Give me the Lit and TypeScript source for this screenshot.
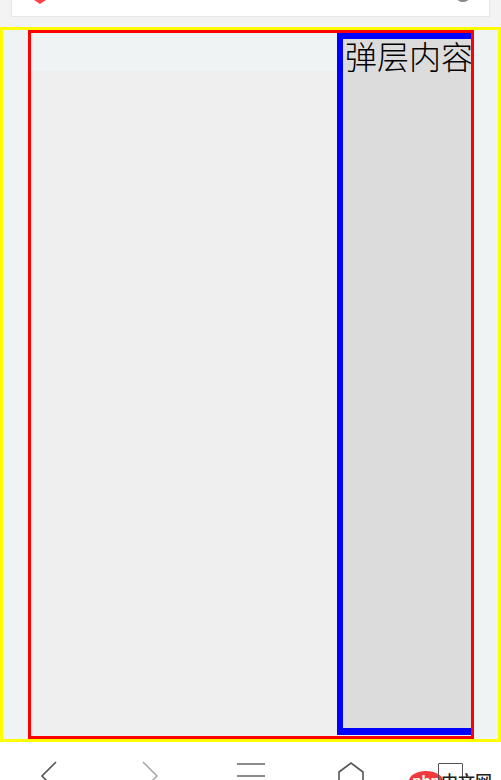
import { LitElement, html, css } from "lit";
import { customElement } from "lit/decorators.js";

@customElement("app-root")
export class AppRoot extends LitElement {
  static styles = css`
    :host { display: block; width: 501px; height: 780px; overflow: hidden; background: #f3f3f3; font-family: "Noto Sans CJK SC", "Liberation Sans", sans-serif; }
    .top { height: 27px; box-sizing: border-box; padding: 0 11px 0 11px; }
    .bar { position: relative; height: 17px; box-sizing: border-box; background: #fff; border: 1px solid #e6e6e6; border-top: 0; overflow: hidden; }
    .pin { position: absolute; left: 22px; top: -3px; width: 12px; height: 7px; }
    .dot { position: absolute; left: 445px; top: -6px; width: 12px; height: 8px; border-radius: 50%; background: #888; }
    .outer { height: 715px; box-sizing: border-box; border: 3px solid #ff0; background: #f0f3f4; padding-left: 25px; }
    .red { height: 100%; box-sizing: border-box; width: 446px; border: 3px solid #f00; background: #efefef; position: relative; display: flex; justify-content: flex-end; align-items: flex-start; }
    .tint { position: absolute; left: 0; top: 0; right: 0; height: 38px; background: #f0f3f4; }
    .panel { position: relative; width: 134px; height: 702px; box-sizing: border-box; border: 6px solid #00f; border-right: 0; border-bottom-width: 7px; background: #dcdcdc; padding-left: 2px; font-size: 32px; font-weight: 300; line-height: 36px; color: #000; white-space: nowrap; overflow: hidden; }
    .panel span { display: block; margin-top: -2px; }
    .nav { height: 38px; background: #fff; display: flex; align-items: flex-start; padding-top: 20px; box-sizing: border-box; overflow: hidden; }
    .nav svg { flex: none; overflow: visible; }
    .back { margin-left: 41px; }
    .forward { margin-left: 85px; }
    .menu { margin-left: 79px; }
    .home { margin-left: 73px; }
    .logo { position: relative; flex: none; width: 84px; height: 18px; margin-left: 45px; }
    .wm { position: absolute; left: 0; top: 9px; width: 34px; height: 20px; border-radius: 50%; background: #f03a3c; color: #fff; font: 700 15px/19px "Liberation Sans", sans-serif; text-align: center; }
    .box { position: absolute; left: 29px; top: 1px; width: 25px; height: 26px; box-sizing: border-box; border: 1.5px solid #555; border-radius: 1px; }
    .zh { position: absolute; left: 32px; top: 7px; font-size: 17px; font-weight: 500; line-height: 24px; color: #222; white-space: nowrap; }
  `;

  render() {
    return html`
      <div class="top"><div class="bar">
        <svg class="pin" viewBox="0 0 12 7"><path d="M0 3 Q3 0 6 3 Q9 0 12 3 L6 7 Z" fill="#f44"/></svg>
        <div class="dot"></div>
      </div></div>
      <div class="outer"><div class="red">
        <div class="tint"></div>
        <div class="panel"><span>弹层内容</span></div>
      </div></div>
      <div class="nav">
        <svg class="back" width="16" height="18" fill="none" stroke="#555" stroke-width="1.6"><path d="M15 0 L1 14 L15 28"/></svg>
        <svg class="forward" width="16" height="18" fill="none" stroke="#aaa" stroke-width="1.6"><path d="M1 0 L15 14 L1 28"/></svg>
        <svg class="menu" width="28" height="18" fill="none" stroke="#666" stroke-width="1.6"><path d="M0 2 H28 M0 14 H28"/></svg>
        <svg class="home" width="26" height="18" fill="none" stroke="#555" stroke-width="1.6"><path d="M1 10 L13 1 L25 10 V30 H1 Z"/></svg>
        <div class="logo">
          <div class="wm">php</div>
          <div class="box"></div>
          <div class="zh">中文网</div>
        </div>
      </div>
    `;
  }
}
